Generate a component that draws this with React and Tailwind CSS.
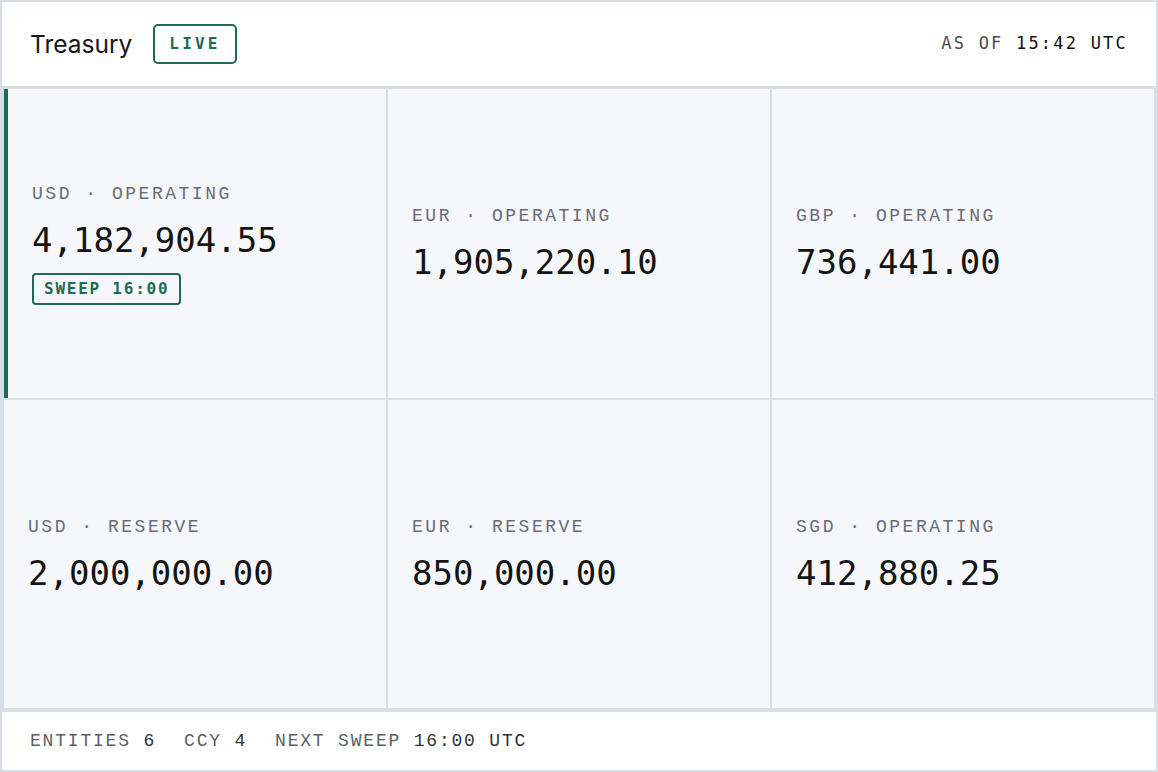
import React from "react";

const accounts = [
  { ccy: "USD", kind: "OPERATING", amount: "4,182,904.55", sweep: "SWEEP 16:00", active: true },
  { ccy: "EUR", kind: "OPERATING", amount: "1,905,220.10" },
  { ccy: "GBP", kind: "OPERATING", amount: "736,441.00" },
  { ccy: "USD", kind: "RESERVE", amount: "2,000,000.00" },
  { ccy: "EUR", kind: "RESERVE", amount: "850,000.00" },
  { ccy: "SGD", kind: "OPERATING", amount: "412,880.25" },
];

const mono = "font-['Liberation_Mono','DejaVu_Sans_Mono',monospace]";
const monoHeavy = "font-['DejaVu_Sans_Mono','Liberation_Mono',monospace]";

const AccountCell = ({ acct }) => (
  <div
    className={`flex flex-col justify-center bg-[#f5f7fb] pl-6 pr-6 ${
      acct.active ? "border-l-4 border-[#1b6b57]" : ""
    }`}
  >
    <p className={`${mono} text-[18px] leading-6 tracking-[0.14em] text-[#6b6b78]`}>
      {acct.ccy} · {acct.kind}
    </p>
    <p className={`${monoHeavy} mt-[14px] text-[34px] leading-10 text-[#141414]`}>
      {acct.amount}
    </p>
    {acct.sweep && (
      <div className="mt-[13px] flex">
        <span
          className={`${monoHeavy} rounded-[4px] border-2 border-[#1b6b57] px-[10px] py-[4px] text-[16px] leading-5 font-bold tracking-[0.11em] text-[#1b6b57]`}
        >
          {acct.sweep}
        </span>
      </div>
    )}
  </div>
);

export default function App() {
  return (
    <div className="flex h-screen w-full flex-col bg-[#d8dde6] p-[2px]">
      {/* Header */}
      <div className="flex h-[84px] items-center justify-between bg-white px-7">
        <div className="flex items-center gap-[21px]">
          <h1 className="font-['Inter',sans-serif] text-[24.5px] text-[#161616]">Treasury</h1>
          <span
            className={`${monoHeavy} rounded-[5px] border-2 border-[#1b6b57] px-[14px] py-[8px] text-[16px] leading-5 font-bold tracking-[0.2em] text-[#1b6b57]`}
          >
            LIVE
          </span>
        </div>
        <p className={`${monoHeavy} text-[17px] tracking-[0.13em]`}>
          <span className="text-[#4a4d55]">AS OF </span>
          <span className="text-[#111111]">15:42 UTC</span>
        </p>
      </div>

      {/* Accounts grid */}
      <div className="mt-[3px] mb-[4px] grid flex-1 grid-cols-3 grid-rows-2 gap-[2px] px-[2px]">
        {accounts.map((acct, i) => (
          <AccountCell key={i} acct={acct} />
        ))}
      </div>

      {/* Footer */}
      <div
        className={`${mono} flex h-[58px] items-center gap-7 bg-white px-7 text-[18px] font-normal tracking-[0.1em]`}
      >
        <p>
          <span className="text-[#5c5f66]">ENTITIES </span>
          <span className="text-[#333333]">6</span>
        </p>
        <p>
          <span className="text-[#5c5f66]">CCY </span>
          <span className="text-[#333333]">4</span>
        </p>
        <p>
          <span className="text-[#5c5f66]">NEXT SWEEP </span>
          <span className="text-[#333333]">16:00 UTC</span>
        </p>
      </div>
    </div>
  );
}
